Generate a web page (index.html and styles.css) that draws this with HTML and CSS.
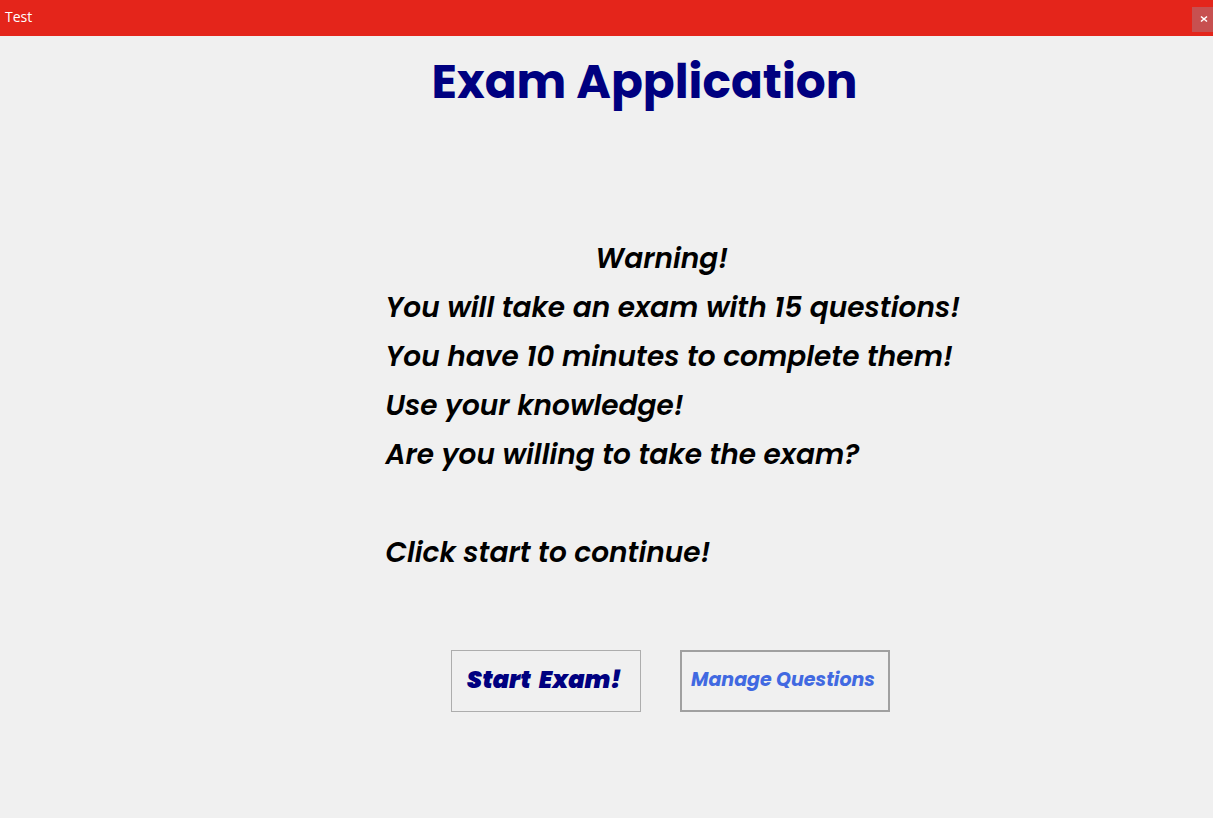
FILE: index.html
```html
<!DOCTYPE html>
<html lang="en">
<head>
<meta charset="utf-8">
<title>Test</title>
<link rel="stylesheet" href="styles.css">
</head>
<body>
<header class="titlebar">
  <span class="caption">Test</span>
  <button class="close" type="button" aria-label="Close"><svg width="8" height="8" viewBox="0 0 8 8"><path d="M1 1.5l6 5M7 1.5l-6 5" stroke="#fff" stroke-width="1.6"/></svg></button>
</header>
<main class="content">
  <h1 class="title">Exam Application</h1>
  <section class="message">
    <p class="warning">Warning!</p>
    <p>You will take an exam with 15 questions!</p>
    <p>You have 10 minutes to complete them!</p>
    <p>Use your knowledge!</p>
    <p>Are you willing to take the exam?</p>
    <p class="prompt">Click start to continue!</p>
  </section>
  <div class="actions">
    <button class="start" type="button">Start&nbsp; Exam!</button>
    <button class="manage" type="button">Manage Questions</button>
  </div>
</main>
</body>
</html>
```
FILE: styles.css
```css
* { box-sizing: border-box; }
body {
  margin: 0;
  min-height: 100vh;
  background: #f0f0f0;
  font-family: Poppins, Inter, "Open Sans", sans-serif;
}
.titlebar {
  display: flex;
  align-items: center;
  justify-content: space-between;
  height: 36px;
  padding-left: 5px;
  background: #e4251b;
  color: #fff;
  font: 14px/20px "Open Sans", sans-serif;
}
.caption { padding-bottom: 2px; }
.close {
  display: grid;
  place-items: center;
  width: 21px;
  height: 25px;
  margin-top: 2px;
  padding: 0 0 0 3px;
  border: 0;
  background: #c75050;
}
.content {
  display: flex;
  flex-direction: column;
  align-items: center;
  padding: 10px 0 0 128px;
}
.title {
  margin: 0;
  padding-right: 52px;
  color: #000080;
  font-size: 47px;
  line-height: 72px;
  font-weight: 700;
}
.message {
  width: 570px;
  margin-top: 116px;
  color: #000;
  font-size: 28px;
  line-height: 49px;
  font-weight: 600;
  font-style: italic;
  white-space: nowrap;
}
.message p { margin: 0; }
.message .warning { padding-left: 210px; }
.message .prompt { margin-top: 49px; }
.actions {
  display: flex;
  gap: 39px;
  margin-top: 73px;
}
.actions button {
  height: 62px;
  padding: 0 4px 4px 0;
  background: transparent;
  font-family: inherit;
  font-style: italic;
  white-space: nowrap;
}
.actions .start {
  width: 190px;
  border: 1px solid #adadad;
  color: #000080;
  font-size: 24px;
  font-weight: 900;
}
.actions .manage {
  width: 210px;
  border: 2px solid #a0a0a0;
  color: #4169e1;
  font-size: 19px;
  font-weight: 700;
}
```
